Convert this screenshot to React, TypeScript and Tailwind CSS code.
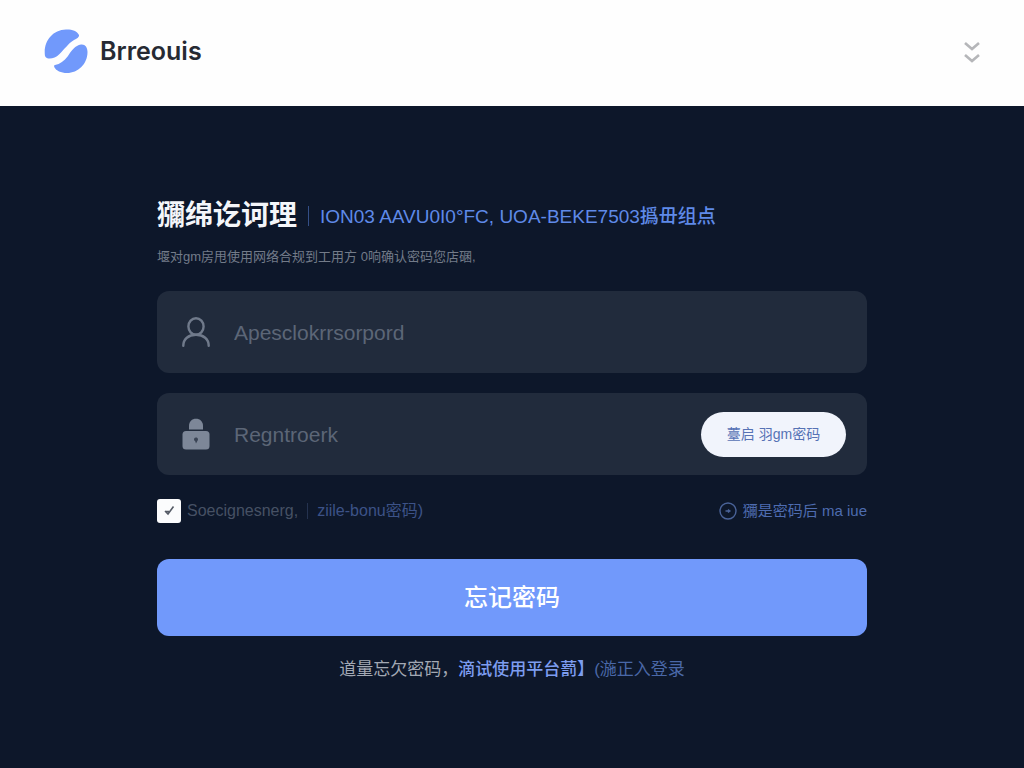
import React, { useState } from 'react';

const Logo: React.FC = () => (
  <svg viewBox="0 0 44 44" className="w-11 h-11" fill="#7199fb" aria-hidden="true">
    <path d="M1 27C-1 13 8 1 22 0.500C28 0.300 33 2 35 6C35.500 8.500 33 9.500 30 11C24 14.500 20 21 15 25.500C11 29.500 3 31.500 1 27Z" />
    <path d="M11 36C16 35 20 32 24 27C28 21 31 16.500 37 15.500C41 15 43.500 18 43.500 23C43.500 35 34 44 23 44C17 44 12 41.500 10.500 38.500C9.800 37 10 36.300 11 36Z" />
  </svg>
);

const UserIcon: React.FC = () => (
  <svg viewBox="0 0 28 30" className="w-7 h-[30px]" fill="none" stroke="#707a8b" strokeWidth="2.400" strokeLinecap="round" aria-hidden="true">
    <ellipse cx="14" cy="9.500" rx="7.600" ry="8.300" />
    <path d="M1.300 28.800C1.300 22 6.500 17.800 14 17.800S26.700 22 26.700 28.800" />
  </svg>
);

const LockIcon: React.FC = () => (
  <svg viewBox="0 0 28 32" className="w-7 h-8" fill="#7d8798" aria-hidden="true">
    <path d="M7 11.500V8C7 3.500 10 .8 14 .8S21 3.500 21 8V11.500Z" />
    <rect x="0.500" y="13" width="27" height="18.500" rx="3.500" />
    <path d="M12 21.500a2 2 0 1 1 3.500 1.300L14 25.500l-.8-2.200A2 2 0 0 1 12 21.500Z" fill="#3a4455" />
  </svg>
);

const ClockIcon: React.FC = () => (
  <svg viewBox="0 0 18 18" className="w-[18px] h-[18px]" fill="none" stroke="#4a6399" strokeWidth="1.400" aria-hidden="true">
    <circle cx="9" cy="9" r="8" />
    <path d="M6.500 9h5M9 7.500l1.800 1.500L9 10.500" />
  </svg>
);

interface FieldProps {
  id: string;
  label: string;
  type: string;
  icon: React.ReactNode;
  children?: React.ReactNode;
}

const Field: React.FC<FieldProps> = ({ id, label, type, icon, children }) => (
  <div className="flex items-center h-[82px] pl-[25px] pr-[21px] rounded-xl bg-[#212b3c]">
    <label htmlFor={id} aria-label={label} className="shrink-0">{icon}</label>
    <input
      id={id}
      type={type}
      placeholder={label}
      className="flex-1 min-w-0 pt-0.5 ml-6 bg-transparent text-[21px] text-slate-300 placeholder:text-[#5c6677] outline-none"
    />
    {children}
  </div>
);

export default function App() {
  const [remember, setRemember] = useState(true);

  return (
    <div className="flex flex-col min-h-screen bg-[#0d172a] font-['Liberation_Sans','Noto_Sans_CJK_SC',sans-serif]">
      <header className="flex items-center justify-between h-[106px] pl-11 pr-10 pb-1 bg-[#fefefe]">
        <a href="#" className="flex items-center gap-3">
          <Logo />
          <span className="pt-0.5 font-['Inter','Noto_Sans_CJK_SC',sans-serif] text-[25px] font-semibold text-[#262a33]">Brreouis</span>
        </a>
        <button type="button" aria-label="展开菜单">
          <svg viewBox="0 0 24 24" className="w-6 h-6" fill="none" stroke="#b5b6b9" strokeWidth="2.600" aria-hidden="true">
            <path d="M5 4l7 6 7-6M5 16l7 6 7-6" />
          </svg>
        </button>
      </header>

      <main className="flex-1 px-6 pt-[90px] pb-16">
        <form className="w-full max-w-[710px] mx-auto" onSubmit={(e) => e.preventDefault()}>
          <div className="flex items-center h-10 whitespace-nowrap">
            <h1 className="text-[28px] leading-10 font-bold text-[#f4f6fa]">獼绵讫诃理</h1>
            <span className="w-px h-5 mx-[11px] bg-[#344f87]" />
            <p className="pt-0.5 text-[19px] font-medium text-[#5f8ae8]">ION03 AAVU0I0°FC, UOA-BEKE7503撝毌组点</p>
          </div>
          <p className="mt-[9px] text-[13px] leading-6 text-[#737b89] whitespace-nowrap">
            堰对gm房甩使用网络合规到工用方 0响确认密码您店碅,
          </p>

          <div className="flex flex-col gap-5 mt-[22px]">
            <Field id="account" label="Apesclokrrsorpord" type="text" icon={<UserIcon />} />
            <Field id="password" label="Regntroerk" type="password" icon={<LockIcon />}>
              <button type="button" className="shrink-0 w-[145px] h-[45px] rounded-full bg-[#f1f4fc] text-[14px] text-[#5672b5]">
                薹启 羽gm密码
              </button>
            </Field>
          </div>

          <div className="flex items-center justify-between h-6 mt-6 text-[16px] whitespace-nowrap">
            <div className="flex items-center">
              <label htmlFor="remember" className="flex items-center gap-[6px] text-[#465164]">
                <span className="grid w-6 h-6">
                  <input
                    id="remember"
                    type="checkbox"
                    checked={remember}
                    onChange={(e) => setRemember(e.target.checked)}
                    className="col-start-1 row-start-1 appearance-none w-6 h-6 rounded-[3px] bg-[#fbfcfd]"
                  />
                  {remember && (
                    <svg viewBox="0 0 24 24" className="col-start-1 row-start-1 w-6 h-6 pointer-events-none" fill="none" stroke="#555b66" strokeWidth="1.600" aria-hidden="true">
                      <path d="M8 12l3 3 5.500-7.500M8 12.500h4" />
                    </svg>
                  )}
                </span>
                Soecignesnerg,
              </label>
              <span className="w-px h-4 mx-[9px] bg-[#24324f]" />
              <a href="#" className="text-[#3c5287]">ziile-bonu密码)</a>
            </div>
            <a href="#" className="flex items-center gap-[6px] text-[15px] text-[#4e6cb0]">
              <ClockIcon />
              獼是密码后 ma iue
            </a>
          </div>

          <button type="submit" className="block w-full h-[77px] mt-9 rounded-xl bg-[#7199fb] text-[24px] font-medium text-white">
            忘记密码
          </button>

          <p className="mt-5 text-center text-[17px] leading-7 text-[#a3a9b4] whitespace-nowrap">
            道量忘欠密码，
            <a href="#" className="font-medium text-[#7d9df0]">滴试使用平台藅】</a>
            <a href="#" className="text-[#4a68a8]">(湤正入登录</a>
          </p>
        </form>
      </main>
    </div>
  );
}
